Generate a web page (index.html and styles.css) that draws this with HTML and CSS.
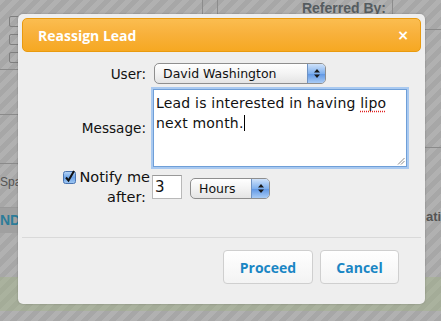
FILE: index.html
```html
<!DOCTYPE html>
<html>
<head>
<meta charset="utf-8">
<link rel="stylesheet" href="styles.css">
</head>
<body>
<div class="page">
  <div class="bg-left">
    <span class="bg-box"></span>
    <span class="bg-box"></span>
    <span class="bg-box"></span>
    <span class="bg-rule r1"></span>
    <span class="bg-rule r2"></span>
    <span class="bg-rule r3"></span>
    <span class="bg-spa">Spa</span>
    <span class="bg-band"><b>ND</b></span>
  </div>
  <div class="bg-mid">
    <div class="bg-head">
      <span class="bg-vline v1"></span>
      <span class="bg-vline v2"></span>
      <span class="bg-ref">Referred By:</span>
      <span class="bg-vline v3"></span>
    </div>
  </div>
  <div class="bg-right">
    <span class="bg-rule rr1"></span>
    <span class="bg-rule rr2"></span>
    <span class="bg-ati">ati</span>
  </div>
  <div class="bg-green"></div>

  <div class="modal">
    <div class="modal-head">
      <span class="modal-title">Reassign Lead</span>
      <span class="modal-close">&#215;</span>
    </div>
    <div class="form">
      <label class="lbl lbl-user">User:</label>
      <div class="select select-user">
        <span class="select-text">David Washington</span>
        <span class="select-arrows">
          <svg width="8" height="11" viewBox="0 0 8 11"><path d="M4 1 L7 4.5 H1 Z M4 10 L7 6.5 H1 Z" fill="#1a1a1a"/></svg>
        </span>
      </div>

      <label class="lbl lbl-msg">Message:</label>
      <div class="textarea">
        <span>Lead is interested in having <span class="spell">lipo</span> next month.<span class="caret"></span></span>
        <svg class="grip" width="9" height="9" viewBox="0 0 9 9"><path d="M8.5 2 L2 8.5 M8.5 5 L5 8.5" stroke="#8a8a8a" stroke-width="1"/></svg>
      </div>

      <div class="lbl lbl-notify">
        <span class="notify-line">
          <svg class="check" width="13" height="14" viewBox="0 0 13 14">
            <defs><linearGradient id="cg" x1="0" y1="0" x2="0" y2="1"><stop offset="0" stop-color="#b9d6f5"/><stop offset="0.5" stop-color="#6da4e8"/><stop offset="1" stop-color="#9fc7f2"/></linearGradient></defs>
            <rect x="0.5" y="1.5" width="12" height="12" rx="2" fill="url(#cg)" stroke="#4a74b0"/>
            <path d="M3 7.5 L5.5 10.5 L11 1" fill="none" stroke="#111" stroke-width="2"/>
          </svg>Notify me</span>
        <span class="after-line">after:</span>
      </div>
      <div class="notify-ctrls">
        <div class="num">3</div>
        <div class="select select-hours">
          <span class="select-text">Hours</span>
          <span class="select-arrows">
            <svg width="8" height="11" viewBox="0 0 8 11"><path d="M4 1 L7 4.5 H1 Z M4 10 L7 6.5 H1 Z" fill="#1a1a1a"/></svg>
          </span>
        </div>
      </div>
    </div>
    <div class="modal-foot">
      <button class="btn btn-proceed">Proceed</button>
      <button class="btn btn-cancel">Cancel</button>
    </div>
  </div>
</div>
</body>
</html>
```

FILE: styles.css
```css
* { box-sizing: border-box; }
html, body { margin: 0; padding: 0; }
body {
  width: 441px;
  height: 321px;
  overflow: hidden;
  font-family: "DejaVu Sans", sans-serif;
}
.page {
  position: relative;
  width: 441px;
  height: 321px;
  overflow: hidden;
  display: grid;
  grid-template-columns: 18px 1fr 16px;
  grid-template-rows: 277px 34px 10px;
  background-color: #ababab;
  background-image: repeating-linear-gradient(-45deg, #a7a7a7 0 5px, #b1b1b1 5px 10px);
}
.bg-left, .bg-mid, .bg-right {
  grid-row: 1 / 2;
  display: flex;
  flex-direction: column;
  overflow: hidden;
}
.bg-box {
  display: block;
  width: 14px;
  height: 11px;
  margin-left: 9px;
  border: 1px solid #7f7f7f;
  border-radius: 2px;
}
.bg-box:first-child { margin-top: 16px; }
.bg-box + .bg-box { margin-top: 7px; }
.bg-rule { display: block; height: 1px; background: #8a8a8a; }
.r1 { margin-top: 6px; }
.r2 { margin-top: 44px; }
.r3 { margin-top: 48px; }
.bg-spa {
  margin-top: 11px;
  font-family: "Liberation Sans", sans-serif;
  font-size: 12px;
  color: #555;
  line-height: 14px;
  white-space: nowrap;
}
.bg-band {
  margin-top: 18px;
  height: 26px;
  background: #a0a0a0;
  border-top: 1px solid #999;
  color: #2c7c99;
  font-family: "Liberation Sans", sans-serif;
  font-size: 14px;
  line-height: 25px;
  white-space: nowrap;
}
.bg-head {
  display: flex;
  height: 18px;
}
.bg-vline { width: 1px; height: 18px; background: #8c8c8c; }
.v1 { margin-left: 184px; }
.v2 { margin-left: 14px; }
.bg-ref {
  margin-left: auto;
  margin-right: 6px;
  font-family: "Liberation Sans", sans-serif;
  font-weight: bold;
  font-size: 14px;
  color: #555c60;
  line-height: 17px;
}
.v3 { margin-right: 32px; }
.rr1 { margin-top: 29px; }
.rr2 { margin-top: 117px; }
.bg-ati {
  margin-top: 61px;
  margin-left: 1px;
  font-family: "Liberation Sans", sans-serif;
  font-weight: bold;
  font-size: 13px;
  color: #555;
  white-space: nowrap;
}
.bg-green {
  grid-column: 1 / 4;
  grid-row: 2 / 3;
  background: rgba(160, 180, 130, 0.4);
}

/* modal overlay */
.modal {
  position: absolute;
  left: 18px;
  top: 14px;
  width: 407px;
  height: 290px;
  padding: 4px;
  background: #eeeeee;
  border-radius: 5px;
  box-shadow: 0 0 2px rgba(0,0,0,0.25);
  display: flex;
  flex-direction: column;
}
.modal-head {
  height: 34px;
  flex: none;
  border: 1px solid #e99a0e;
  border-radius: 5px;
  background: linear-gradient(#fbbd50, #f8b03a 50%, #f6a822);
  display: flex;
  align-items: center;
  padding: 0 11px 0 15px;
}
.modal-title {
  font-family: "Open Sans", sans-serif;
  font-weight: bold;
  font-size: 14px;
  color: #fff;
  flex: 1;
}
.modal-close {
  font-family: "DejaVu Sans", sans-serif;
  font-weight: bold;
  font-size: 14px;
  color: #fff;
}
.form {
  display: grid;
  grid-template-columns: 128px auto;
  column-gap: 6px;
  row-gap: 4px;
  margin-top: 11px;
  margin-left: -4px;
  align-items: center;
}
.lbl {
  text-align: right;
  font-size: 13.6px;
  color: #111;
}
.select {
  display: flex;
  align-items: center;
  height: 21px;
  border: 1px solid #8e8e8e;
  border-radius: 5px;
  background: linear-gradient(#ffffff, #f3f3f3 50%, #e4e4e4);
  overflow: hidden;
}
.select-text {
  flex: 1;
  font-size: 12.5px;
  color: #111;
  padding-left: 8px;
}
.select-arrows {
  width: 18px;
  align-self: stretch;
  display: flex;
  align-items: center;
  justify-content: center;
  background: linear-gradient(#cfe2fa, #7fb0ee 50%, #5d95e4 51%, #a8cbf5);
  border-left: 1px solid #6f93c4;
}
.select-user { width: 172px; margin-left: 2px; }
.textarea {
  position: relative;
  width: 254px;
  height: 78px;
  background: #fff;
  border: 1px solid #6f9fd8;
  box-shadow: 0 0 0 2px #a9c9f0;
  padding: 3px 2px 0 2px;
  font-size: 14px;
  letter-spacing: 0.2px;
  line-height: 20px;
  color: #111;
  margin-left: 1px;
  margin-top: 1px;
}
.spell {
  text-decoration: underline dotted #e02020;
  text-underline-offset: 3px;
}
.caret {
  display: inline-block;
  width: 1px;
  height: 16px;
  background: #000;
  vertical-align: -3px;
}
.grip { position: absolute; right: 1px; bottom: 1px; }
.lbl-notify {
  display: flex;
  flex-direction: column;
  align-items: flex-end;
  line-height: 20px;
  font-size: 14.5px;
  margin-right: -4px;
  margin-top: -4px;
  align-self: start;
}
.notify-line { display: flex; align-items: center; }
.check { margin-right: 3px; }
.after-line { margin-right: 4px; }
.notify-ctrls {
  display: flex;
  align-items: flex-start;
  gap: 8px;
  align-self: start;
  margin-top: 4px;
}
.num {
  width: 30px;
  height: 24px;
  background: #fff;
  border: 1px solid #b9b9b9;
  border-top-color: #999;
  font-size: 15px;
  line-height: 22px;
  padding-left: 2px;
  color: #111;
}
.select-hours { width: 80px; margin-top: 3px; }
.modal-foot {
  margin-top: auto;
  border-top: 1px solid #d9d9d9;
  height: 63px;
  flex: none;
  display: flex;
  justify-content: flex-end;
  align-items: flex-start;
  gap: 7px;
  padding: 12px 22px 0 0;
}
.btn {
  height: 34px;
  border: 1px solid #cfcfcf;
  border-radius: 4px;
  background: linear-gradient(#ffffff, #f3f3f3);
  font-family: "Open Sans", sans-serif;
  font-weight: bold;
  font-size: 14px;
  color: #1a86c4;
  padding: 0;
}
.btn-proceed { width: 90px; }
.btn-cancel { width: 79px; }
```
